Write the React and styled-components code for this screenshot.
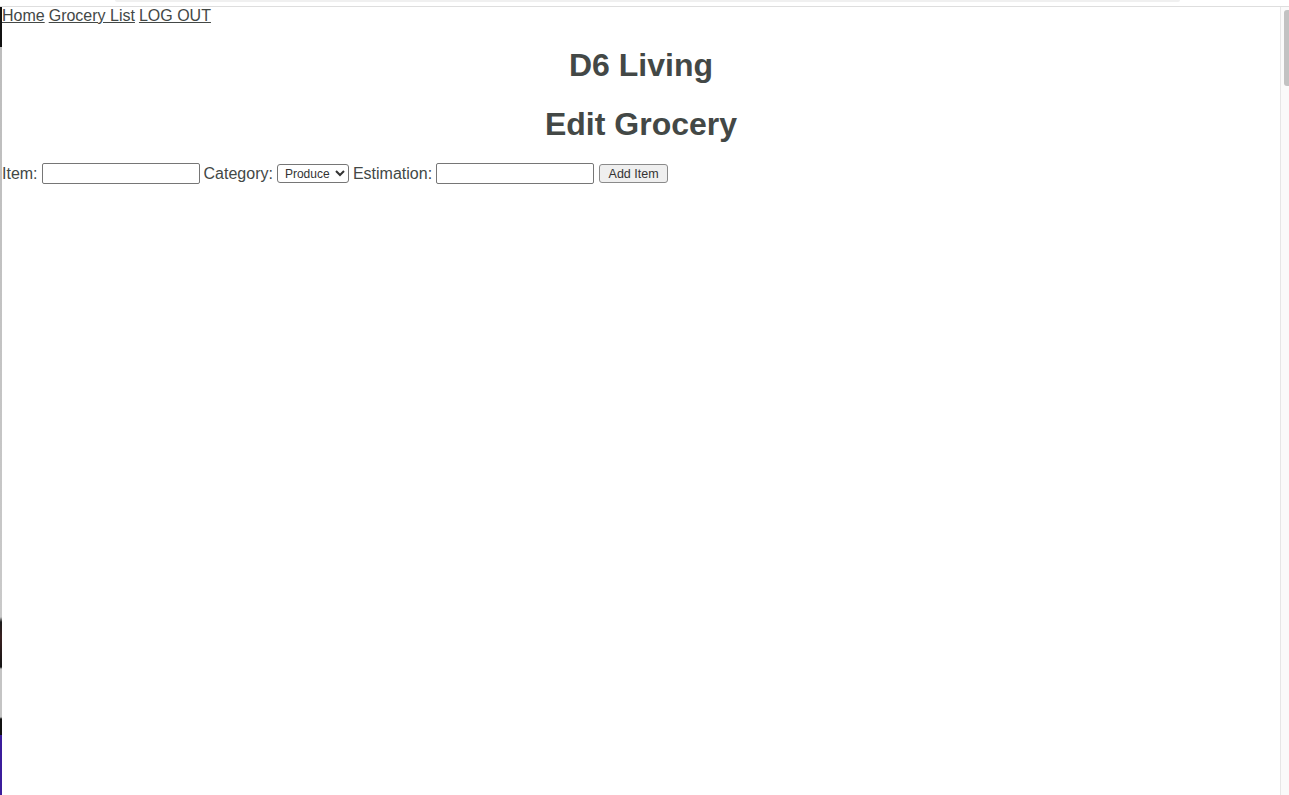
import styled, { createGlobalStyle } from 'styled-components';

const GlobalStyle = createGlobalStyle`
  html, body {
    margin: 0;
    padding: 0;
    background: #ffffff;
    overflow: hidden;
  }
  body {
    font-family: 'Liberation Sans', Arial, Helvetica, sans-serif;
    color: #434846;
  }
`

const Frame = styled.div`
  display: flex;
  flex-direction: column;
  height: 100vh;
  width: 100vw;
`

const TopBar = styled.div`
  height: 6px;
  border-bottom: 1px solid #dedede;
  display: flex;
  padding-left: 115px;
`

const TopGhost = styled.div`
  width: 1065px;
  height: 2px;
  background: #f0f0f0;
  border-radius: 0 0 3px 3px;
`

const Body = styled.div`
  flex: 1;
  display: flex;
  min-height: 0;
`

const LeftStrip = styled.div`
  width: 2px;
  background: linear-gradient(
    to bottom,
    #111 0px, #111 40px,
    #bdbdbd 40px, #c9c9c9 610px,
    #1c1c1c 615px, #3a2020 630px, #151515 660px,
    #c4c4c4 662px, #c4c4c4 710px,
    #111 712px, #111 728px,
    #3b1d9c 728px, #3b1d9c 100%
  );
`

const Page = styled.main`
  flex: 1;
  padding: 0;
  font-size: 16px;
  line-height: 18px;
`

const Nav = styled.nav`
  display: flex;
  gap: 4px;
`

const NavLink = styled.a`
  color: #434846;
  text-decoration: underline;
  font-size: 16px;
`

const Title = styled.h1`
  text-align: center;
  font-size: 32px;
  line-height: 37px;
  font-weight: 700;
  margin: 22px 0;
  color: #434846;
`

const Form = styled.form`
  display: flex;
  align-items: center;
  gap: 4px;
  font-size: 16px;
  margin-top: -2px;
`

const Label = styled.label`
  color: #434846;
`

const TextInput = styled.input`
  box-sizing: border-box;
  width: 158px;
  height: 21px;
  border: 1px solid #767676;
  border-radius: 2px;
  padding: 1px 2px;
  font-size: 13px;
  background: #fff;
`

const Select = styled.select`
  box-sizing: border-box;
  width: 72px;
  height: 19px;
  border: 1px solid #767676;
  border-radius: 3px;
  font-family: 'Liberation Sans', Arial, sans-serif;
  font-size: 12px;
  color: #333;
  background: #fff;
  padding: 0 0 0 3px;
`

const Button = styled.button`
  box-sizing: border-box;
  height: 19px;
  width: 69px;
  margin-left: 1px;
  border: 1px solid #8a8a8a;
  border-radius: 3px;
  background: #efefef;
  font-family: 'Liberation Sans', Arial, sans-serif;
  font-size: 12.5px;
  color: #333;
  padding: 0;
`

const Scrollbar = styled.div`
  width: 8px;
  border-left: 1px solid #e6e6e6;
  background: #fafafa;
  display: flex;
  justify-content: flex-end;
  padding-top: 3px;
`

const Thumb = styled.div`
  width: 5px;
  height: 76px;
  background: #c2c2c2;
  border-radius: 3px 0 0 3px;
`

export default function App() {
  return (
    <>
      <GlobalStyle />
      <Frame>
        <TopBar>
          <TopGhost />
        </TopBar>
        <Body>
          <LeftStrip />
          <Page>
            <Nav>
              <NavLink href="#">Home</NavLink>
              <NavLink href="#">Grocery List</NavLink>
              <NavLink href="#">LOG OUT</NavLink>
            </Nav>
            <Title>D6 Living</Title>
            <Title>Edit Grocery</Title>
            <Form onSubmit={(e) => e.preventDefault()}>
              <Label>Item:</Label>
              <TextInput type="text" />
              <Label>Category:</Label>
              <Select defaultValue="Produce">
                <option>Produce</option>
                <option>Dairy</option>
                <option>Meat</option>
                <option>Bakery</option>
                <option>Other</option>
              </Select>
              <Label>Estimation:</Label>
              <TextInput type="text" />
              <Button type="submit">Add Item</Button>
            </Form>
          </Page>
          <Scrollbar>
            <Thumb />
          </Scrollbar>
        </Body>
      </Frame>
    </>
  )
}
